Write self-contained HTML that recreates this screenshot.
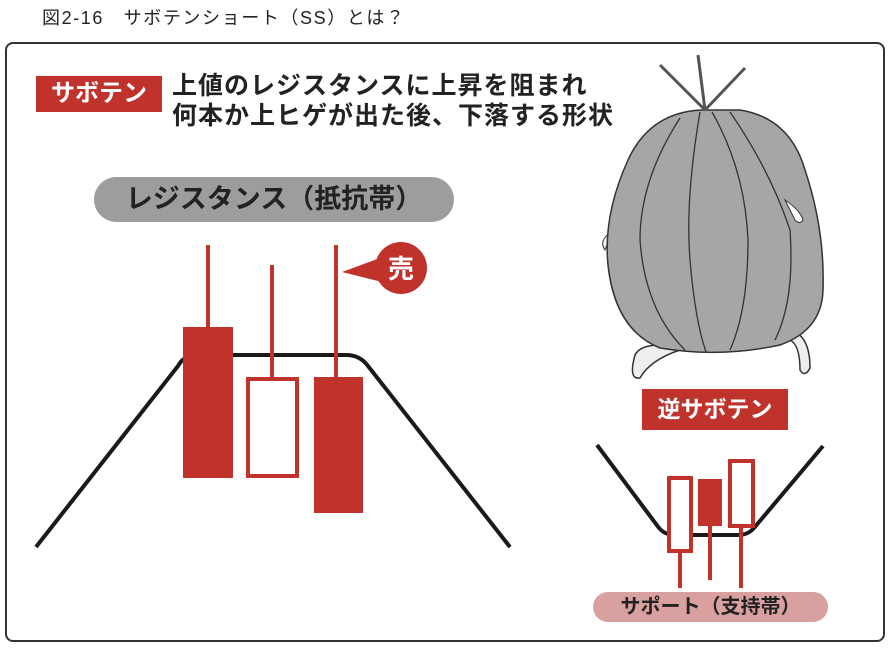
<!DOCTYPE html>
<html><head><meta charset="utf-8"><style>
body{margin:0;width:892px;height:649px;background:#fff;position:relative;overflow:hidden;font-family:"Liberation Sans","Noto Sans CJK JP",sans-serif;}
.t{position:absolute;white-space:nowrap;}
</style></head><body>
<div class="t" style="left:42px;top:4px;font-size:18px;letter-spacing:1.6px;color:#222;">図2-16　サボテンショート（SS）とは？</div>
<div style="position:absolute;left:5px;top:42px;width:876px;height:596px;border:2px solid #333;border-radius:8px;"></div>
<div class="t" style="left:36px;top:76px;width:126px;height:36px;background:#c0332d;color:#fff;font-weight:bold;font-size:24px;line-height:36px;text-align:center;">サボテン</div>
<div class="t" style="left:172px;top:71px;font-size:25px;letter-spacing:1px;font-weight:bold;color:#222;line-height:30px;">上値のレジスタンスに上昇を阻まれ<br>何本か上ヒゲが出た後、下落する形状</div>
<div class="t" style="left:94px;top:177px;width:360px;height:45px;border-radius:23px;background:#9d9d9d;color:#222;font-weight:bold;font-size:27px;line-height:45px;text-align:center;">レジスタンス（抵抗帯）</div>
<svg style="position:absolute;left:0;top:0" width="892" height="649">
<path d="M36 547 L178 366 Q184 355 196 355 L346 355 Q360 355 368 366 L510 547" fill="none" stroke="#1a1a1a" stroke-width="4"/>
<g fill="#c0332d">
<rect x="206" y="245" width="4" height="84"/><rect x="183" y="327" width="50" height="151"/>
<rect x="270" y="265" width="4" height="114"/><rect x="248" y="379" width="49" height="97" fill="#fff" stroke="#c0332d" stroke-width="4"/>
<rect x="334" y="245" width="4" height="134"/><rect x="314" y="377" width="49" height="136"/>
<path d="M342 272 L380 258 L382 282 Z"/><circle cx="401" cy="268" r="26"/>
</g>
<text x="401" y="278" text-anchor="middle" font-size="26" font-weight="bold" fill="#fff" font-family="Liberation Sans,Noto Sans CJK JP,sans-serif">売</text>
<path d="M635 355 Q628 380 640 378 Q650 360 680 350 L790 340 Q800 345 800 370 Q805 378 810 368 Q810 335 790 330 L660 345 Q640 345 635 355Z" fill="#eee" stroke="#333" stroke-width="1.5"/>
<path d="M612 232 Q598 240 605 250 Z" fill="#eee" stroke="#333"/>
<path d="M702 110 Q650 112 628 160 Q603 215 608 265 Q615 330 660 348 Q720 358 780 345 Q822 330 823 290 Q825 230 805 170 Q790 118 740 110 Z" fill="#a6a6a6" stroke="#333" stroke-width="1.5"/>
<path d="M680 118 Q640 180 640 240 Q645 310 685 350 M700 112 Q685 200 690 260 Q695 320 706 352 M712 112 Q745 170 748 240 Q748 310 730 350 M730 112 Q770 170 790 230 Q795 300 775 340" fill="none" stroke="#333" stroke-width="1.3"/>
<path d="M785 200 Q800 210 803 220 Q800 225 795 220 Q790 210 785 200Z" fill="#fff" stroke="#333"/>
<path d="M705 110 L660 65 M705 110 L698 55 M705 110 L745 68" stroke="#555" stroke-width="3"/>
<path d="M597 445 L659 528 Q665 535 675 535 L738 535 Q748 535 754 528 L823 446" fill="none" stroke="#1a1a1a" stroke-width="4"/>
<g fill="#c0332d">
<rect x="678" y="550" width="4" height="38"/><rect x="669" y="478" width="22" height="73" fill="#fff" stroke="#c0332d" stroke-width="4"/>
<rect x="708" y="524" width="4" height="56"/><rect x="698" y="479" width="24" height="47"/>
<rect x="739" y="525" width="4" height="63"/><rect x="730" y="461" width="23" height="65" fill="#fff" stroke="#c0332d" stroke-width="4"/>
</g>
</svg>
<div class="t" style="left:642px;top:389px;width:146px;height:41px;background:#c0332d;color:#fff;font-weight:bold;font-size:23px;line-height:41px;text-align:center;">逆サボテン</div>
<div class="t" style="left:593px;top:592px;width:235px;height:30px;border-radius:15px;background:#d9a0a0;color:#222;font-weight:bold;font-size:20px;line-height:30px;text-align:center;">サポート（支持帯）</div>
</body></html>
